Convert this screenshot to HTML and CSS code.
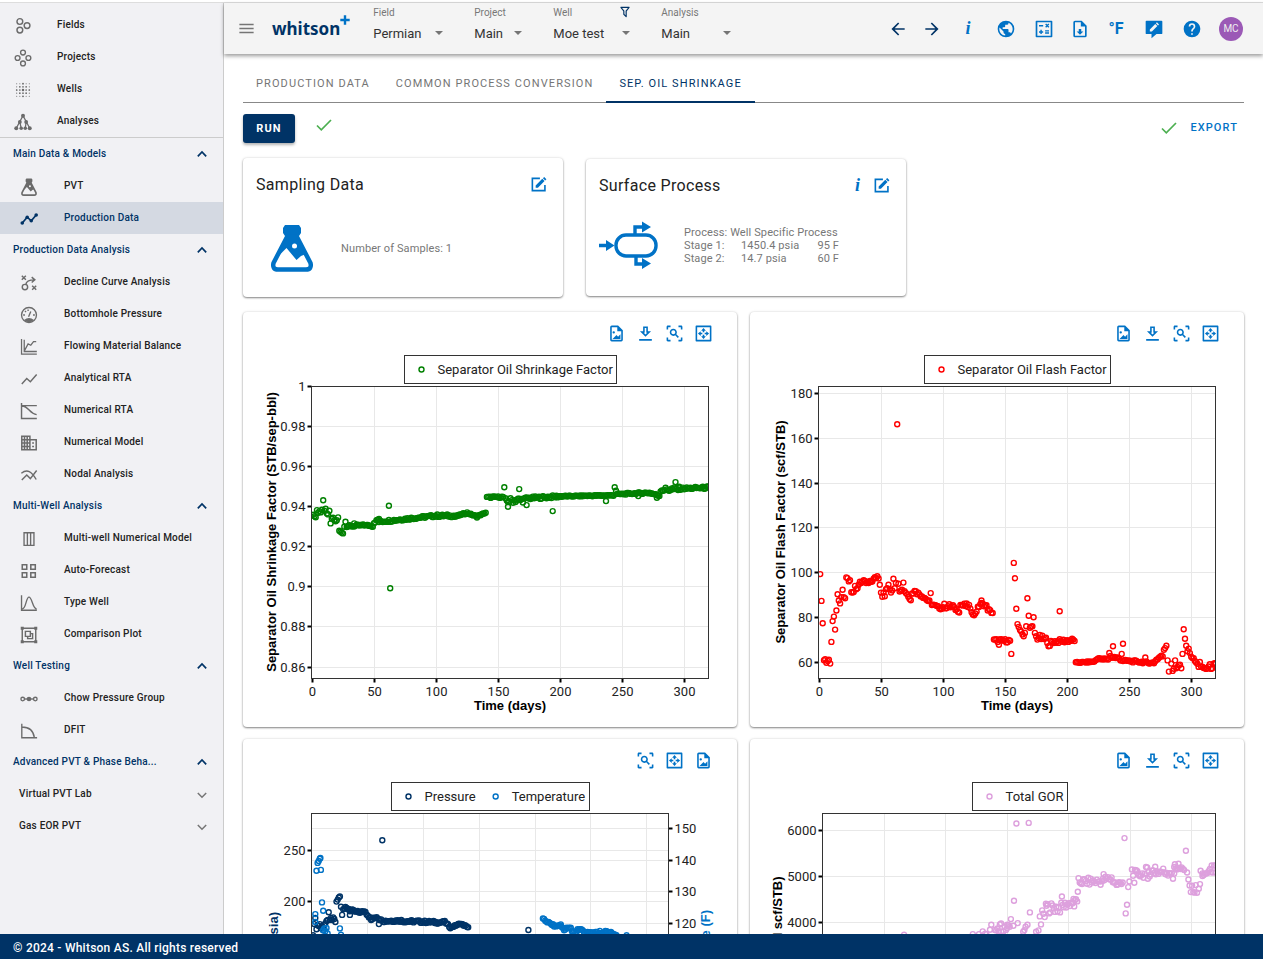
FILE: index.html
```html
<!DOCTYPE html>
<html lang="en">
  <head>
    <meta charset="UTF-8" />
    <meta name="viewport" content="width=device-width, initial-scale=1.0" />
    <title>whitson+ | Separator Oil Shrinkage</title>
    <link rel="stylesheet" href="styles.css">
  </head>
  <body>
    <!-- icon sprite -->
    <svg class="sprite" aria-hidden="true">
      <symbol id="i-fields" viewBox="0 0 20 20">
        <g fill="none" stroke="currentColor" stroke-width="1.6"><circle cx="6.5" cy="5" r="3.2"/><circle cx="6.5" cy="14.5" r="3.2"/><circle cx="14.5" cy="9.5" r="3.2"/></g>
      </symbol>
      <symbol id="i-projects" viewBox="0 0 20 20">
        <g fill="none" stroke="currentColor" stroke-width="1.5"><circle cx="10" cy="4" r="2.7"/><circle cx="4" cy="10" r="2.7"/><circle cx="16" cy="10" r="2.7"/><circle cx="10" cy="16" r="2.7"/></g>
      </symbol>
      <symbol id="i-wells" viewBox="0 0 20 20">
        <g stroke="currentColor" fill="none" stroke-linecap="round">
          <path stroke-width="1.2" stroke-dasharray="0 3.5" d="M3 3h14.5M3 17h14.5M3 3v14.5M17 3v14.5"/>
          <path stroke-width="1.9" stroke-dasharray="0 3.5" d="M6.5 6.5h8M6.5 13.5h8M6.5 6.5v8M13.5 6.5v8M10 3v14.5M3 10h14.5"/>
          <path stroke-width="2.8" d="M10 10v.01"/>
        </g>
      </symbol>
      <symbol id="i-analyses" viewBox="0 0 20 20">
        <g fill="currentColor"><circle cx="10" cy="3" r="2.2"/><circle cx="6.5" cy="10" r="2.1"/><circle cx="13.5" cy="10" r="2.1"/><circle cx="2.5" cy="17" r="2.2"/><circle cx="8" cy="17" r="2"/><circle cx="12.5" cy="17" r="2"/><circle cx="17.5" cy="17" r="2.2"/></g>
        <path fill="none" stroke="currentColor" stroke-width="1.4" d="M2.5 17L10 3l7.5 14M6.5 10L8 17M13.5 10l-1 7"/>
      </symbol>
      <symbol id="i-flask" viewBox="0 0 44 48">
        <path fill="currentColor" d="M15 1h14l2 3v5l-2 3v2h-14v-2l-2-3v-5z"/>
        <path fill="none" stroke="currentColor" stroke-width="4.5" stroke-linejoin="round" d="M17 13L3.5 39Q2 45.5 8 45.5h28Q42 45.5 40.5 39L27 13z"/>
        <path fill="currentColor" d="M17 13h10l9 17-5 2-4.5 4-10-12-8 8z"/>
        <circle cx="24.5" cy="22" r="2.5" fill="#fff"/>
      </symbol>
      <symbol id="i-trend" viewBox="0 0 20 20">
        <g fill="currentColor"><circle cx="2.5" cy="14.5" r="2"/><circle cx="8" cy="8" r="2"/><circle cx="12.5" cy="12" r="2"/><circle cx="18" cy="5.5" r="2"/></g>
        <path fill="none" stroke="currentColor" stroke-width="1.9" d="M2.5 14.5L8 8l4.5 4L18 5.5"/>
      </symbol>
      <symbol id="i-decline" viewBox="0 0 20 20">
        <g fill="none" stroke="currentColor" stroke-width="1.6"><path d="M2 2l4.5 4.5M6.5 2L2 6.5M13.5 13l4.5 4.5M18 13l-4.5 4.5"/><circle cx="5.5" cy="14.5" r="3"/><path d="M6.5 11.5Q7 6.5 16 6.5M13 3.5l3.5 3-3.5 3"/></g>
      </symbol>
      <symbol id="i-gauge" viewBox="0 0 20 20">
        <circle cx="10" cy="10" r="8.3" fill="none" stroke="currentColor" stroke-width="1.5"/>
        <path fill="currentColor" d="M4.5 15.5Q10 11 15.5 15.5Q10 20.5 4.5 15.5z"/>
        <path fill="none" stroke="currentColor" stroke-width="1.5" d="M9.5 12l2.5-6M3.5 10h2M14.5 10h2M5.5 5.5l1.2 1.2M9 4v1.5"/>
      </symbol>
      <symbol id="i-balance" viewBox="0 0 20 20">
        <path fill="none" stroke="currentColor" stroke-width="1.4" d="M1.7 1v17h17M4.7 2v13h14M5 14L9 6.5l3 1.5 3-4 3 0"/>
      </symbol>
      <symbol id="i-line" viewBox="0 0 20 20">
        <path fill="none" stroke="currentColor" stroke-width="1.6" d="M2 15.5l5.5-6 4 3.5 7-8"/>
      </symbol>
      <symbol id="i-numrta" viewBox="0 0 20 20">
        <path fill="none" stroke="currentColor" stroke-width="1.6" d="M1.7 1v17.3h17M1.7 4h17M2 4.5c8 0 8 8.5 16.5 9.5"/>
      </symbol>
      <symbol id="i-grid" viewBox="0 0 20 20">
        <path fill="none" stroke="currentColor" stroke-width="1.7" d="M2 2.5h9v15h-9zM2 6.3h9M2 10h9M2 13.8h9M5 2.5v15M8 2.5v15M11 6.3h7v11.2h-7M13.5 10h2M13.5 13.8h2"/>
      </symbol>
      <symbol id="i-nodal" viewBox="0 0 20 20">
        <path fill="none" stroke="currentColor" stroke-width="1.6" d="M1.5 8C8 3 13 6 18 15M2 15.5l5.5-5.5 4 4 7-9"/>
      </symbol>
      <symbol id="i-columns" viewBox="0 0 20 20">
        <path fill="none" stroke="currentColor" stroke-width="1.5" d="M4.5 3h11v14h-11zM8.2 3v14M11.8 3v14"/>
      </symbol>
      <symbol id="i-squares" viewBox="0 0 20 20">
        <path fill="none" stroke="currentColor" stroke-width="1.7" d="M2.5 3h5v5h-5zM12 3h5v5h-5zM2.5 12h5v5h-5zM12 12h5v5h-5z"/>
      </symbol>
      <symbol id="i-bell" viewBox="0 0 20 20">
        <path fill="none" stroke="currentColor" stroke-width="1.5" d="M1.7 1.5v16.5h17M2.5 16.5C7 16.5 6.5 3.5 10 3.5s4 13 8.5 13"/>
      </symbol>
      <symbol id="i-compare" viewBox="0 0 20 20">
        <path fill="none" stroke="currentColor" stroke-width="1.6" d="M2.5 2.5h15v15h-15zM6 6h5.5v5.5h-5.5zM8.5 11.5v2.5h5.5v-5.5h-2.5"/>
        <path fill="currentColor" d="M.8 .8h3.4v3.4h-3.4zM15.8 .8h3.4v3.4h-3.4zM.8 15.8h3.4v3.4h-3.4zM15.8 15.8h3.4v3.4h-3.4z"/>
      </symbol>
      <symbol id="i-chow" viewBox="0 0 20 20">
        <g fill="none" stroke="currentColor" stroke-width="1.5"><circle cx="3" cy="10" r="2"/><circle cx="17" cy="10" r="2"/><path d="M5 10h10"/></g>
        <circle cx="10" cy="10" r="2.6" fill="currentColor"/>
      </symbol>
      <symbol id="i-dfit" viewBox="0 0 20 20">
        <path fill="none" stroke="currentColor" stroke-width="1.5" d="M2 2v15.5h17M2 5.5c8 0 13 4 14 12"/>
      </symbol>
      <symbol id="i-up" viewBox="0 0 10 10"><path fill="none" stroke="currentColor" stroke-width="1.7" d="M.8 7.3L5 3l4.2 4.3"/></symbol>
      <symbol id="i-down" viewBox="0 0 10 10"><path fill="none" stroke="currentColor" stroke-width="1.5" d="M.8 3L5 7.3 9.2 3"/></symbol>
      <symbol id="i-menu" viewBox="0 0 24 24"><path fill="currentColor" d="M3,6H21V8H3V6M3,11H21V13H3V11M3,16H21V18H3V16Z"/></symbol>
      <symbol id="i-plus" viewBox="0 0 10 10"><path fill="none" stroke="currentColor" stroke-width="2.4" d="M5 .3v9.4M.3 5h9.4"/></symbol>
      <symbol id="i-filter" viewBox="0 0 24 24"><path fill="currentColor" d="M15,19.88C15.04,20.18 14.94,20.5 14.71,20.71C14.32,21.1 13.69,21.1 13.3,20.71L9.29,16.7C9.06,16.47 8.96,16.16 9,15.87V10.75L4.21,4.62C3.87,4.19 3.95,3.56 4.38,3.22C4.57,3.08 4.78,3 5,3H19C19.22,3 19.43,3.08 19.62,3.22C20.05,3.56 20.13,4.19 19.79,4.62L15,10.75V19.88M7.04,5L11,10.06V15.58L13,17.58V10.05L16.96,5H7.04Z"/></symbol>
      <symbol id="i-left" viewBox="0 0 24 24"><path fill="currentColor" d="M20,11V13H8L13.5,18.5L12.08,19.92L4.16,12L12.08,4.08L13.5,5.5L8,11H20Z"/></symbol>
      <symbol id="i-right" viewBox="0 0 24 24"><path fill="currentColor" d="M4,11V13H16L10.5,18.5L11.92,19.92L19.84,12L11.92,4.08L10.5,5.5L16,11H4Z"/></symbol>
      <symbol id="i-earth" viewBox="0 0 24 24"><path fill="currentColor" d="M17.9,17.39C17.64,16.59 16.89,16 16,16H15V13A1,1 0 0,0 14,12H8V10H10A1,1 0 0,0 11,9V7H13A2,2 0 0,0 15,5V4.59C17.93,5.77 20,8.64 20,12C20,14.08 19.2,15.97 17.9,17.39M11,19.93C7.05,19.44 4,16.08 4,12C4,11.38 4.08,10.78 4.21,10.21L9,15V16A2,2 0 0,0 11,18M12,2A10,10 0 0,0 2,12A10,10 0 0,0 12,22A10,10 0 0,0 22,12A10,10 0 0,0 12,2Z"/></symbol>
      <symbol id="i-calc" viewBox="0 0 24 24"><path fill="none" stroke="currentColor" stroke-width="2" stroke-linejoin="round" d="M3 3h18v18h-18z"/><path fill="none" stroke="currentColor" stroke-width="1.7" d="M6 8h5M6 15.5h5M8.5 13v5M13.3 14.2h4.7M13.3 16.8h4.7M14 6l3.8 3.8M17.8 6L14 9.8"/></symbol>
      <symbol id="i-filedown" viewBox="0 0 24 24"><path fill="currentColor" d="M14,2L20,8V20A2,2 0 0,1 18,22H6A2,2 0 0,1 4,20V4A2,2 0 0,1 6,2H14M18,20V9H13V4H6V20H18M12,19L8,15H10.5V12H13.5V15H16L12,19Z"/></symbol>
      <symbol id="i-feedback" viewBox="0 0 24 24"><path fill="currentColor" d="M3 2h18a1 1 0 0 1 1 1v14a1 1 0 0 1-1 1h-6l-6 5v-5H3a1 1 0 0 1-1-1V3a1 1 0 0 1 1-1z"/><path fill="#f4f4f4" d="M7 15v-2.5l6.5-6.5 2.5 2.5L9.5 15zM14.3 5.2l1.2-1.2 2.5 2.5-1.2 1.2z"/></symbol>
      <symbol id="i-help" viewBox="0 0 24 24"><path fill="currentColor" d="M15.07,11.25L14.17,12.17C13.45,12.89 13,13.5 13,15H11V14.5C11,13.39 11.45,12.39 12.17,11.67L13.41,10.41C13.78,10.05 14,9.55 14,9C14,7.89 13.1,7 12,7A2,2 0 0,0 10,9H8A4,4 0 0,1 12,5A4,4 0 0,1 16,9C16,9.88 15.64,10.67 15.07,11.25M13,19H11V17H13M12,2A10,10 0 0,0 2,12A10,10 0 0,0 12,22A10,10 0 0,0 22,12C22,6.47 17.5,2 12,2Z"/></symbol>
      <symbol id="i-check" viewBox="0 0 16 16"><path fill="none" stroke="currentColor" stroke-width="1.7" d="M1 8.5l4.3 4.3L15 3"/></symbol>
      <symbol id="i-edit" viewBox="0 0 18 18"><path fill="none" stroke="currentColor" stroke-width="1.7" d="M10.5 2.5h-8v13h13.3v-6"/><path fill="currentColor" d="M6 12.5v-2.5l7-7 2.4 2.4-7 7.1zM13.7 2.3l1.3-1.3 2.4 2.4-1.3 1.3z"/></symbol>
      <symbol id="i-separator" viewBox="0 0 60 48">
        <g fill="none" stroke="currentColor"><rect x="17" y="14" width="40" height="21" rx="10" stroke-width="3.4"/><path stroke-width="3.4" d="M0 24.5h9M36 13V6h7M37 36v7h7"/></g>
        <path fill="currentColor" d="M7 19l8.5 5.5L7 30zM43 .5l9 5.5-9 5.5zM43 37l9 5.5-9 5.5z"/>
      </symbol>
      <symbol id="i-image" viewBox="0 0 24 24"><path fill="currentColor" d="M14,2L20,8V20A2,2 0 0,1 18,22H6A2,2 0 0,1 4,20V4A2,2 0 0,1 6,2H14M18,20V9H13V4H6V20H18M17,13V19H7L12,14L14,16M10,10.5A1.5,1.5 0 0,1 8.5,12A1.5,1.5 0 0,1 7,10.5A1.5,1.5 0 0,1 8.5,9A1.5,1.5 0 0,1 10,10.5Z"/></symbol>
      <symbol id="i-download" viewBox="0 0 24 24"><path fill="currentColor" d="M13,5V11H14.17L12,13.17L9.83,11H11V5H13M15,3H9V9H5L12,16L19,9H15V3M20,19H4V21H20V19Z"/></symbol>
      <symbol id="i-scan" viewBox="0 0 24 24"><path fill="currentColor" d="M17 22V20H20V17H22V20.5C22 20.89 21.84 21.24 21.54 21.54C21.24 21.84 20.89 22 20.5 22H17M7 22H3.5C3.11 22 2.76 21.84 2.46 21.54C2.16 21.24 2 20.89 2 20.5V17H4V20H7V22M17 2H20.5C20.89 2 21.24 2.16 21.54 2.46C21.84 2.76 22 3.11 22 3.5V7H20V4H17V2M7 2V4H4V7H2V3.5C2 3.11 2.16 2.76 2.46 2.46C2.76 2.16 3.11 2 3.5 2H7M10.5 6C13 6 15 8 15 10.5C15 11.38 14.75 12.2 14.31 12.9L17.57 16.16L16.16 17.57L12.9 14.31C12.2 14.75 11.38 15 10.5 15C8 15 6 13 6 10.5C6 8 8 6 10.5 6M10.5 8C9.12 8 8 9.12 8 10.5C8 11.88 9.12 13 10.5 13C11.88 13 13 11.88 13 10.5C13 9.12 11.88 8 10.5 8Z"/></symbol>
      <symbol id="i-expand" viewBox="0 0 24 24"><path fill="none" stroke="currentColor" stroke-width="2" stroke-linejoin="round" d="M3 3h18v18h-18z"/><path fill="currentColor" d="M12 5l3 3.5h-2v2h-2v-2h-2zM12 19l3-3.5h-2v-2h-2v2h-2zM5 12l3.5-3v2h2v2h-2v2zM19 12l-3.5-3v2h-2v2h2v2z"/></symbol>
    </svg>

    <div class="app">
      <div class="workspace">
        <nav class="sidebar">
          <ul class="nav-list nav-top">
            <li><a href="#"><svg class="icon"><use href="#i-fields"/></svg>Fields</a></li>
            <li><a href="#"><svg class="icon"><use href="#i-projects"/></svg>Projects</a></li>
            <li><a href="#"><svg class="icon"><use href="#i-wells"/></svg>Wells</a></li>
            <li><a href="#"><svg class="icon"><use href="#i-analyses"/></svg>Analyses</a></li>
          </ul>

          <button class="nav-header">Main Data &amp; Models<svg><use href="#i-up"/></svg></button>
          <ul class="nav-list">
            <li><a href="#"><svg class="icon"><use href="#i-flask"/></svg>PVT</a></li>
            <li><a href="#" class="active"><svg class="icon"><use href="#i-trend"/></svg>Production Data</a></li>
          </ul>

          <button class="nav-header">Production Data Analysis<svg><use href="#i-up"/></svg></button>
          <ul class="nav-list">
            <li><a href="#"><svg class="icon"><use href="#i-decline"/></svg>Decline Curve Analysis</a></li>
            <li><a href="#"><svg class="icon"><use href="#i-gauge"/></svg>Bottomhole Pressure</a></li>
            <li><a href="#"><svg class="icon"><use href="#i-balance"/></svg>Flowing Material Balance</a></li>
            <li><a href="#"><svg class="icon"><use href="#i-line"/></svg>Analytical RTA</a></li>
            <li><a href="#"><svg class="icon"><use href="#i-numrta"/></svg>Numerical RTA</a></li>
            <li><a href="#"><svg class="icon"><use href="#i-grid"/></svg>Numerical Model</a></li>
            <li><a href="#"><svg class="icon"><use href="#i-nodal"/></svg>Nodal Analysis</a></li>
          </ul>

          <button class="nav-header">Multi-Well Analysis<svg><use href="#i-up"/></svg></button>
          <ul class="nav-list">
            <li><a href="#"><svg class="icon"><use href="#i-columns"/></svg>Multi-well Numerical Model</a></li>
            <li><a href="#"><svg class="icon"><use href="#i-squares"/></svg>Auto-Forecast</a></li>
            <li><a href="#"><svg class="icon"><use href="#i-bell"/></svg>Type Well</a></li>
            <li><a href="#"><svg class="icon"><use href="#i-compare"/></svg>Comparison Plot</a></li>
          </ul>

          <button class="nav-header">Well Testing<svg><use href="#i-up"/></svg></button>
          <ul class="nav-list">
            <li><a href="#"><svg class="icon"><use href="#i-chow"/></svg>Chow Pressure Group</a></li>
            <li><a href="#"><svg class="icon"><use href="#i-dfit"/></svg>DFIT</a></li>
          </ul>

          <button class="nav-header">Advanced PVT &amp; Phase Beha...<svg><use href="#i-up"/></svg></button>
          <button class="nav-header nav-sub">Virtual PVT Lab<svg><use href="#i-down"/></svg></button>
          <button class="nav-header nav-sub">Gas EOR PVT<svg><use href="#i-down"/></svg></button>
        </nav>

        <div class="page">
          <header class="topbar">
            <button class="menu-btn" aria-label="Menu"><svg><use href="#i-menu"/></svg></button>
            <a href="#" class="logo">whitson<svg><use href="#i-plus"/></svg></a>

            <div class="pickers">
              <div class="picker">
                <label for="field">Field</label>
                <div class="select-wrap"><select id="field"><option>Permian</option></select></div>
              </div>
              <div class="picker picker-sm">
                <label for="project">Project</label>
                <div class="select-wrap"><select id="project"><option>Main</option></select></div>
              </div>
              <div class="picker picker-lg">
                <div class="picker-head">
                  <label for="well">Well</label>
                  <button aria-label="Filter wells"><svg><use href="#i-filter"/></svg></button>
                </div>
                <div class="select-wrap"><select id="well"><option>Moe test</option></select></div>
              </div>
              <div class="picker">
                <label for="analysis">Analysis</label>
                <div class="select-wrap"><select id="analysis"><option>Main</option></select></div>
              </div>
            </div>

            <div class="actions">
              <button class="narrow dark" aria-label="Back"><svg><use href="#i-left"/></svg></button>
              <button class="narrow dark" aria-label="Forward"><svg><use href="#i-right"/></svg></button>
              <button class="info">i</button>
              <button aria-label="Map"><svg><use href="#i-earth"/></svg></button>
              <button aria-label="Calculator"><svg><use href="#i-calc"/></svg></button>
              <button class="narrow" aria-label="Download report"><svg><use href="#i-filedown"/></svg></button>
              <button class="units">°F</button>
              <button aria-label="Feedback"><svg><use href="#i-feedback"/></svg></button>
              <button aria-label="Help"><svg><use href="#i-help"/></svg></button>
              <button class="avatar">MC</button>
            </div>
          </header>

          <main class="content">
            <nav class="tabs">
              <a href="#">PRODUCTION DATA</a>
              <a href="#">COMMON PROCESS CONVERSION</a>
              <a href="#" class="active">SEP. OIL SHRINKAGE</a>
            </nav>

            <div class="run-row">
              <button class="run-btn">RUN</button>
              <svg class="check"><use href="#i-check"/></svg>
              <div class="export">
                <svg class="check"><use href="#i-check"/></svg>
                <button>EXPORT</button>
              </div>
            </div>

            <div class="info-cards">
              <section class="card info-card">
                <div class="card-head">
                  <h2>Sampling Data</h2>
                  <button aria-label="Edit sampling data"><svg><use href="#i-edit"/></svg></button>
                </div>
                <div class="card-body sampling">
                  <svg class="flask"><use href="#i-flask"/></svg>
                  <p>Number of Samples: 1</p>
                </div>
              </section>
              <section class="card info-card">
                <div class="card-head">
                  <h2>Surface Process</h2>
                  <button class="info">i</button>
                  <button aria-label="Edit surface process"><svg><use href="#i-edit"/></svg></button>
                </div>
                <div class="card-body surface">
                  <svg class="separator"><use href="#i-separator"/></svg>
                  <table>
                    <tr><td colspan="3">Process: Well Specific Process</td></tr>
                    <tr><td class="stage">Stage 1:</td><td>1450.4 psia</td><td class="temp">95 F</td></tr>
                    <tr><td class="stage">Stage 2:</td><td>14.7 psia</td><td class="temp">60 F</td></tr>
                  </table>
                </div>
              </section>
            </div>

            <div class="charts">
              <section class="card chart-card">
                <div class="chart-tools">
                  <button aria-label="Save image"><svg><use href="#i-image"/></svg></button>
                  <button aria-label="Download"><svg><use href="#i-download"/></svg></button>
                  <button aria-label="Zoom"><svg><use href="#i-scan"/></svg></button>
                  <button aria-label="Fit"><svg><use href="#i-expand"/></svg></button>
                </div>
                <svg class="chart" id="shrinkage" viewBox="0 0 494 377"></svg>
              </section>
              <section class="card chart-card">
                <div class="chart-tools">
                  <button aria-label="Save image"><svg><use href="#i-image"/></svg></button>
                  <button aria-label="Download"><svg><use href="#i-download"/></svg></button>
                  <button aria-label="Zoom"><svg><use href="#i-scan"/></svg></button>
                  <button aria-label="Fit"><svg><use href="#i-expand"/></svg></button>
                </div>
                <svg class="chart" id="flash" viewBox="0 0 494 377"></svg>
              </section>
              <section class="card chart-card">
                <div class="chart-tools">
                  <button aria-label="Zoom"><svg><use href="#i-scan"/></svg></button>
                  <button aria-label="Fit"><svg><use href="#i-expand"/></svg></button>
                  <button aria-label="Save image"><svg><use href="#i-image"/></svg></button>
                </div>
                <svg class="chart" id="conditions" viewBox="0 0 494 377"></svg>
              </section>
              <section class="card chart-card">
                <div class="chart-tools">
                  <button aria-label="Save image"><svg><use href="#i-image"/></svg></button>
                  <button aria-label="Download"><svg><use href="#i-download"/></svg></button>
                  <button aria-label="Zoom"><svg><use href="#i-scan"/></svg></button>
                  <button aria-label="Fit"><svg><use href="#i-expand"/></svg></button>
                </div>
                <svg class="chart" id="gor" viewBox="0 0 494 377"></svg>
              </section>
            </div>
          </main>
        </div>
      </div>

      <footer class="footer">© 2024 - Whitson AS. All rights reserved</footer>
    </div>

    <script src="charts.js"></script>
  </body>
</html>
```

FILE: styles.css
```css
* {
  box-sizing: border-box;
}

body {
  margin: 0;
  font-family: Roboto, "Liberation Sans", sans-serif;
  color: #222;
  background-color: #fff;
}

button {
  padding: 0;
  border: none;
  background: none;
  font-family: inherit;
  color: inherit;
  cursor: pointer;
}

a {
  color: inherit;
  text-decoration: none;
}

ul {
  list-style: none;
  margin: 0;
  padding: 0;
}

.sprite {
  display: none;
}

.app {
  display: flex;
  flex-direction: column;
  height: 100vh;
  padding-top: 2px;
}

.workspace {
  display: flex;
  flex: 1;
  min-height: 0;
  border-top: 1px solid #ddd;
}

/* sidebar */
.sidebar {
  width: 224px;
  flex-shrink: 0;
  padding-top: 5px;
  background-color: #f1f1f4;
  border-right: 1px solid #ccc;
  overflow: hidden;
  font-size: 10px;
  font-weight: 500;
}

.nav-list a {
  display: flex;
  align-items: center;
  gap: 26px;
  height: 32px;
  padding: 0 0 2px 20px;
  letter-spacing: 0.02em;
}

.nav-list .icon {
  width: 18px;
  height: 18px;
  margin-top: 3px;
  color: #6b6b6b;
}

.nav-top {
  padding-bottom: 1px;
  border-bottom: 1px solid #ccc;
}

.nav-list.nav-top a {
  gap: 25px;
  padding: 0 0 0 14px;
}

.nav-list a.active {
  background-color: #d4d9e2;
  color: #003366;
}

.nav-list a.active .icon {
  color: #003366;
}

.nav-header {
  display: flex;
  align-items: center;
  justify-content: space-between;
  width: 100%;
  height: 32px;
  padding: 0 16px 2px 13px;
  font-size: 10px;
  font-weight: 500;
  letter-spacing: 0.02em;
  color: #003366;
}

.nav-header svg {
  width: 10px;
  height: 10px;
  margin-top: 2px;
}

.nav-sub {
  padding-left: 19px;
  color: #222;
}

.nav-sub svg {
  margin-top: 4px;
  color: #757575;
}

/* top bar */
.page {
  display: flex;
  flex-direction: column;
  flex: 1;
  min-width: 0;
}

.topbar {
  display: flex;
  align-items: center;
  height: 51px;
  flex-shrink: 0;
  padding: 0 20px 0 13px;
  background-color: #f4f4f4;
  box-shadow: 0 2px 4px rgba(0, 0, 0, 0.4);
  z-index: 1;
}

.menu-btn svg {
  display: block;
  width: 19px;
  height: 19px;
  color: #757575;
}

.logo {
  display: flex;
  margin-left: 16px;
  font-family: "Noto Sans", sans-serif;
  font-size: 17px;
  font-weight: 700;
  line-height: 24px;
  color: #003366;
}

.logo svg {
  width: 10px;
  height: 10px;
  margin-top: -2px;
  color: #0072c6;
}

.pickers {
  display: flex;
  gap: 28px;
  margin-left: 23px;
}

.picker {
  width: 73px;
}

.picker-sm {
  width: 51px;
}

.picker-lg {
  width: 80px;
}

.picker-head {
  display: flex;
  justify-content: space-between;
}

.picker-head button {
  height: 16px;
  padding-right: 1px;
}

.picker-head svg {
  width: 14px;
  height: 14px;
  color: #003366;
}

.picker label {
  display: block;
  font-size: 10px;
  line-height: 16px;
  color: #777;
}

.select-wrap {
  display: grid;
  align-items: center;
  margin-bottom: 7px;
}

.select-wrap select,
.select-wrap::after {
  grid-area: 1 / 1;
}

.select-wrap::after {
  content: "";
  justify-self: end;
  margin-right: 3px;
  border: 4px solid transparent;
  border-top-color: #757575;
  border-bottom: none;
  pointer-events: none;
}

.select-wrap select {
  appearance: none;
  width: 100%;
  height: 24px;
  padding: 0;
  border: none;
  background: none;
  font-family: inherit;
  font-size: 13px;
  color: #333;
}

.actions {
  display: flex;
  align-items: center;
  margin-left: auto;
  color: #0072c6;
}

.actions button {
  display: flex;
  align-items: center;
  justify-content: center;
  width: 38px;
  height: 30px;
}

.actions .narrow {
  width: 34px;
}

.actions .dark {
  color: #003366;
}

.actions svg {
  width: 20px;
  height: 20px;
}

.info {
  font-family: "Liberation Serif", serif;
  font-size: 18px;
  font-weight: 700;
  font-style: italic;
}

.actions .units {
  font-size: 16px;
  font-weight: 700;
}

.actions .avatar {
  width: 24px;
  height: 24px;
  margin-left: 8px;
  border-radius: 50%;
  background-color: #9b59b6;
  color: #eee;
  font-size: 10px;
}

/* content */
.content {
  flex: 1;
  min-height: 0;
  padding: 10px 19px 0;
  overflow-y: auto;
  scrollbar-width: none;
}

.tabs {
  display: flex;
  border-bottom: 1px solid #888;
}

.tabs a {
  height: 39px;
  padding: 0 13px;
  margin-bottom: -1px;
  border-bottom: 2px solid transparent;
  font-size: 11px;
  line-height: 39px;
  letter-spacing: 0.1em;
  color: #757575;
}

.tabs a.active {
  border-color: #003366;
  color: #003366;
}

.run-row {
  display: flex;
  align-items: flex-start;
  margin-top: 11px;
}

.run-btn {
  width: 52px;
  height: 29px;
  border-radius: 3px;
  background-color: #003366;
  box-shadow: 0 2px 3px rgba(0, 0, 0, 0.3);
  color: #fff;
  font-size: 11px;
  font-weight: 700;
  letter-spacing: 0.1em;
}

.check {
  width: 16px;
  height: 16px;
  color: #4caf50;
}

.run-btn + .check {
  margin: 3px 0 0 21px;
}

.export {
  display: flex;
  align-items: center;
  gap: 13px;
  height: 27px;
  margin-left: auto;
  padding-right: 6px;
}

.export button {
  font-size: 11px;
  font-weight: 500;
  letter-spacing: 0.1em;
  color: #0072c6;
}

.card {
  border-radius: 4px;
  background-color: #fff;
  box-shadow: 0 1px 2px rgba(0, 0, 0, 0.45), 0 0 3px rgba(0, 0, 0, 0.12);
}

.info-cards {
  display: flex;
  align-items: center;
  gap: 23px;
  margin-top: 15px;
}

.info-card {
  width: 320px;
  padding: 14px 16px 24px 13px;
}

.card-head {
  display: flex;
  align-items: center;
  gap: 13px;
  height: 24px;
  color: #0072c6;
}

.card-head h2 {
  flex: 1;
  margin: 0;
  font-size: 16px;
  font-weight: 400;
  letter-spacing: 0.02em;
  color: #222;
}

.card-head svg {
  display: block;
  width: 17px;
  height: 17px;
}

.card-body {
  display: flex;
  align-items: center;
  font-size: 11px;
  letter-spacing: 0.01em;
  white-space: nowrap;
  color: #777;
}

.sampling {
  gap: 27px;
  padding: 28px 0 1px 14px;
}

.surface {
  gap: 25px;
  padding: 24px 0 3px;
}

.card-body svg {
  color: #0072c6;
}

.flask {
  width: 44px;
  height: 48px;
}

.separator {
  width: 60px;
  height: 48px;
}

.card-body table {
  border-collapse: collapse;
  width: 155px;
  line-height: 13px;
}

.card-body td {
  padding: 0;
}

.card-body .stage {
  width: 57px;
}

.card-body .temp {
  text-align: right;
}

/* charts */
.charts {
  display: grid;
  grid-template-columns: 1fr 1fr;
  gap: 12px 13px;
  margin-top: 15px;
  padding-bottom: 20px;
}

.chart-tools {
  display: flex;
  justify-content: flex-end;
  height: 38px;
  padding: 4px 19px 0 0;
}

.chart-tools button {
  display: flex;
  align-items: center;
  justify-content: center;
  width: 29px;
  color: #0072c6;
}

.chart-tools svg {
  width: 19px;
  height: 19px;
}

.chart {
  display: block;
  width: 100%;
}

.chart text {
  font-size: 13px;
  fill: #222;
}

.chart .axis-title {
  font-family: "Liberation Sans", Arial, sans-serif;
  font-weight: 700;
  fill: #000;
  text-anchor: middle;
}

.chart .grid {
  stroke: #e8e8e8;
}

.chart .tick {
  stroke: #000;
  stroke-width: 2;
}

.chart .frame {
  fill: none;
  stroke: #333;
}

.chart .point {
  fill: none;
  stroke-width: 1.4;
}

.footer {
  height: 25px;
  flex-shrink: 0;
  padding-left: 13px;
  background-color: #003366;
  color: #fff;
  font-size: 12px;
  font-weight: 500;
  line-height: 29px;
  letter-spacing: 0.02em;
  z-index: 1;
}
```

FILE: charts.js
```js
const SVG_NS = "http://www.w3.org/2000/svg";
const TOP = 36.5;
const BOTTOM = 328.5;

function add(parent, name, attrs, text) {
  const node = document.createElementNS(SVG_NS, name);
  for (const key in attrs) node.setAttribute(key, attrs[key]);
  if (text !== undefined) node.textContent = text;
  parent.appendChild(node);
  return node;
}

// repeatable scatter between -1 and 1
function wobble(n) {
  const s = Math.sin(n * 12.9898) * 43758.5453;
  return (s - Math.floor(s)) * 2 - 1;
}

// runs: [day from, value from, day to, value to, spread], one reading per day
function expand(series) {
  const points = series.points.slice();
  series.runs.forEach(([d0, v0, d1, v1, spread]) => {
    for (let d = d0; d <= d1; d++) {
      const t = d1 === d0 ? 0 : (d - d0) / (d1 - d0);
      points.push([d, v0 + (v1 - v0) * t + wobble(d) * spread]);
    }
  });
  return points;
}

function drawChart(id, chart) {
  const svg = document.getElementById(id);
  const { left, right } = chart;
  const xPos = (d) => left + (d / 320) * (right - left);
  // each axis is given by one tick value, its position and the pixels per unit
  const yPos = (axis, v) => axis.y + (axis.value - v) * axis.scale;

  const clip = add(svg, "clipPath", { id: id + "-clip" });
  add(clip, "rect", { x: left, y: TOP, width: right - left, height: BOTTOM - TOP });

  for (let d = 0; d <= 300; d += 50) {
    const x = Math.round(xPos(d)) + 0.5;
    if (d > 0) add(svg, "line", { class: "grid", x1: x, x2: x, y1: TOP, y2: BOTTOM });
    add(svg, "line", { class: "tick", x1: x, x2: x, y1: BOTTOM, y2: BOTTOM + 4 });
    add(svg, "text", { x: x, y: 346, "text-anchor": "middle" }, d);
  }

  chart.axes.forEach((axis) => {
    const onRight = axis.side === "right";
    axis.ticks.forEach((v) => {
      const y = Math.round(yPos(axis, v) - 0.5) + 0.5;
      const x = onRight ? right : left;
      add(svg, "line", { class: "grid", x1: left, x2: right, y1: y, y2: y });
      add(svg, "line", { class: "tick", x1: x, x2: onRight ? x + 4 : x - 4, y1: y, y2: y });
      add(svg, "text", {
        x: onRight ? x + 6 : x - 6,
        y: y + 4,
        "text-anchor": onRight ? "start" : "end",
      }, v);
    });
    const title = add(svg, "text", {
      class: "axis-title",
      transform: `translate(${axis.titleX} 182) rotate(-90)`,
    }, axis.title);
    if (axis.color) title.style.fill = axis.color;
  });

  const plot = add(svg, "g", { "clip-path": `url(#${id}-clip)` });
  chart.series.forEach((series) => {
    const axis = chart.axes[series.axis || 0];
    expand(series).forEach(([d, v]) => {
      add(plot, "circle", {
        class: "point",
        cx: (xPos(d) + 0.5).toFixed(1),
        cy: yPos(axis, v).toFixed(1),
        r: 2.5,
        stroke: series.color,
      });
    });
  });

  add(svg, "rect", { class: "frame", x: left, y: TOP, width: right - left, height: BOTTOM - TOP });
  add(svg, "text", { class: "axis-title", x: (left + right) / 2, y: 360 }, "Time (days)");
  drawLegend(svg, chart.series, (left + right) / 2);
}

function drawLegend(svg, seriesList, center) {
  const group = add(svg, "g", {});
  let x = 17;
  seriesList.forEach((series) => {
    add(group, "circle", { class: "point", cx: x, cy: 19, r: 2.5, stroke: series.color });
    const label = add(group, "text", { x: x + 16, y: 23 }, series.name);
    x += 16 + label.getComputedTextLength() + 20;
  });
  const width = Math.round(x - 16);
  add(group, "rect", { class: "frame", x: 0, y: 5, width: width, height: 28 });
  group.setAttribute("transform", `translate(${Math.round(center - width / 2) + 0.5} .5)`);
}

drawChart("shrinkage", {
  left: 68.5,
  right: 465.5,
  axes: [{
    title: "Separator Oil Shrinkage Factor (STB/sep-bbl)",
    titleX: 33, value: 1, y: 36.5, scale: 2004,
    ticks: ["1", "0.98", "0.96", "0.94", "0.92", "0.9", "0.88", "0.86"],
  }],
  series: [{
    name: "Separator Oil Shrinkage Factor",
    color: "#008000",
    points: [
      [1, 0.936], [2, 0.9353], [3, 0.9348], [4, 0.9383], [5, 0.937], [6, 0.9378], [7, 0.9372],
      [8, 0.9385], [9, 0.9432], [10, 0.938], [11, 0.939], [12, 0.9367], [13, 0.9362], [14, 0.938],
      [15, 0.9317], [16, 0.934], [17, 0.9345], [18, 0.9333], [19, 0.9328], [20, 0.9333], [21, 0.9347],
      [22, 0.928], [23, 0.9275], [24, 0.927], [25, 0.9267], [26, 0.93], [27, 0.9325], [34, 0.9317],
      [62, 0.9405], [63, 0.8993], [155, 0.9497], [158, 0.94], [167, 0.9488], [173, 0.9408],
      [194, 0.9378], [237, 0.9428], [244, 0.9497], [245, 0.948], [263, 0.9453], [278, 0.9445],
      [293, 0.9523],
    ],
    runs: [
      [28, 0.9302, 42, 0.9308, 0.0005], [42, 0.931, 49, 0.9303, 0.0004], [50, 0.932, 54, 0.934, 0.0004],
      [54, 0.9325, 100, 0.9355, 0.0006], [100, 0.9355, 115, 0.9355, 0.0007],
      [115, 0.935, 124, 0.9368, 0.0004], [125, 0.937, 133, 0.935, 0.0004], [134, 0.9355, 140, 0.937, 0.0003],
      [141, 0.9447, 154, 0.9449, 0.0004], [156, 0.943, 172, 0.9435, 0.0014],
      [173, 0.9442, 200, 0.9452, 0.0007], [200, 0.9452, 243, 0.9457, 0.0003],
      [246, 0.9462, 272, 0.947, 0.0004], [273, 0.9468, 280, 0.9455, 0.0004],
      [281, 0.9485, 296, 0.9488, 0.0012], [296, 0.949, 320, 0.9496, 0.0006],
    ],
  }],
});

drawChart("flash", {
  left: 68.5,
  right: 465.5,
  axes: [{
    title: "Separator Oil Flash Factor (scf/STB)",
    titleX: 35, value: 180, y: 43.5, scale: 2.2375,
    ticks: [180, 160, 140, 120, 100, 80, 60],
  }],
  series: [{
    name: "Separator Oil Flash Factor",
    color: "#ff0000",
    points: [
      [1, 99.3], [2, 87.3], [3, 77.3], [4, 60.8], [5, 61.2], [6, 59.7], [7, 60.5], [8, 61], [9, 59.3],
      [10, 69], [11, 78.3], [12, 80.3], [13, 74.5], [14, 83], [15, 90.3], [16, 87.5], [17, 86.2],
      [18, 89], [19, 92.3], [20, 89], [21, 88.5], [22, 97.8], [23, 97.5], [24, 96], [25, 96.5],
      [26, 91.2], [27, 91], [28, 91.3], [29, 94], [30, 92.5], [31, 93], [32, 94.5],
      [48, 97.3], [49, 94.5], [50, 91], [51, 89.2], [52, 91], [53, 89.4], [54, 92.5], [55, 93],
      [56, 94.5], [57, 92.5], [58, 91], [59, 92], [60, 97.2], [61, 93], [62, 95.3], [63, 166.3],
      [64, 95], [65, 91.5], [66, 92], [67, 92.3], [68, 95.5], [90, 90.8], [145, 67.7], [155, 63.6],
      [157, 104.3], [158, 97.4], [159, 83.8], [166, 73], [167, 76], [168, 88.5], [169, 80.7],
      [170, 75.3], [171, 75.8], [172, 76], [173, 80], [174, 73], [175, 71.5], [176, 70], [185, 67],
      [186, 67.2], [194, 82.7], [234, 64], [237, 67], [244, 63.6], [245, 68.2], [263, 62],
      [277, 62.5], [278, 65.5], [279, 66.2], [280, 67.3], [281, 60.7], [282, 55.7], [284, 59.3],
      [285, 56], [286, 57], [287, 60.7], [292, 57.2], [293, 63.6], [294, 74.6], [295, 70.4],
      [296, 67.3], [297, 64.8], [298, 66], [306, 57.8], [307, 60],
    ],
    runs: [
      [33, 96, 41, 95, 0.9], [41, 95.5, 47, 98.3, 0.8], [69, 91.8, 74, 88, 0.6],
      [75, 90.5, 78, 92, 0.6], [79, 91, 84, 89.3, 0.8], [85, 88.8, 89, 86.8, 0.8],
      [91, 85.8, 99, 83.8, 0.5], [100, 85, 108, 84.8, 1.2], [109, 84, 113, 82.8, 0.7],
      [114, 85.5, 121, 85, 1], [122, 83.5, 125, 80.7, 0.4], [126, 82, 131, 87, 0.8],
      [131, 86, 135, 85, 0.6], [136, 83.5, 140, 82, 0.7], [141, 69.6, 154, 69.5, 0.8],
      [160, 76.7, 165, 71.5, 0.3], [177, 71, 184, 69.8, 1.3], [187, 69, 206, 69.8, 0.9],
      [207, 59.7, 221, 60.1, 0.3], [222, 60.3, 226, 62, 0.3], [227, 61.2, 233, 61.2, 0.5],
      [235, 62.5, 243, 61.3, 0.8], [245, 60.6, 262, 59.9, 0.5], [263, 59.8, 270, 59.5, 0.4],
      [271, 60.5, 276, 62.8, 0.4], [288, 57.5, 291, 58.8, 0.5], [299, 63.5, 305, 59, 0.6],
      [308, 57.7, 312, 57, 0.4], [313, 57.5, 320, 58.6, 1.3],
    ],
  }],
});

drawChart("conditions", {
  left: 68.5,
  right: 425.5,
  axes: [
    {
      title: "Pressure (psia)", color: "#003366",
      titleX: 35, value: 250, y: 73.5, scale: 1.022, ticks: [250, 200, 150, 100, 50],
    },
    {
      title: "Temperature (F)", color: "#0072c6", side: "right",
      titleX: 467, value: 150, y: 51.5, scale: 3.16,
      ticks: [150, 140, 130, 120, 110, 100, 90, 80, 70],
    },
  ],
  series: [
    {
      name: "Pressure",
      color: "#003366",
      points: [
        [1, 167], [2, 178], [3, 184], [4, 173], [5, 177], [6, 176], [7, 178], [8, 174], [9, 176],
        [10, 172], [11, 177], [12, 179], [13, 181], [14, 182], [15, 189.5], [16, 182], [17, 184],
        [18, 182], [19, 184.5], [20, 183], [21, 180], [22, 200], [23, 202], [24, 204], [25, 205],
        [26, 195], [27, 187], [34, 187], [53, 182], [60, 178], [63, 260], [64, 180], [194, 172.2],
      ],
      runs: [
        [28, 193.5, 33, 193, 1.5], [34, 191.5, 41, 189.5, 1.5], [42, 189.5, 48, 190.5, 1],
        [49, 188, 52, 184, 1], [54, 183, 58, 185, 1], [59, 184, 62, 182, 1],
        [65, 181, 80, 181.5, 1.2], [81, 181, 117, 179.5, 1.3], [118, 181, 124, 175, 1],
        [125, 175, 133, 178.5, 0.8], [134, 178, 140, 175, 0.8],
      ],
    },
    {
      name: "Temperature",
      color: "#0072c6",
      axis: 1,
      points: [
        [3, 122.9], [3, 120.4], [4, 136.6], [5, 139.1], [6, 139.7], [7, 140.4], [7.5, 140.7],
        [8, 136.9], [9, 126.6], [10, 124], [10, 117.8], [11, 118.4], [12, 117.5], [13, 118.5],
        [14, 116.8], [25, 118.4], [26, 116.4], [258, 117.6], [282, 116.2],
      ],
      runs: [
        [207, 121.3, 217, 119.2, 0.3], [218, 119, 223, 119.5, 0.3], [223, 119, 227, 118, 0.5],
        [228, 118.5, 232, 118.5, 0.2], [233, 117.5, 237, 117.2, 0.3], [238, 118, 243, 118, 0.4],
        [244, 117, 262, 117, 0.3], [263, 117.4, 268, 117.2, 0.2], [269, 116.8, 273, 116.3, 0.2],
      ],
    },
  ],
});

drawChart("gor", {
  left: 72.5,
  right: 465.5,
  axes: [{
    title: "Total GOR (actual scf/STB)",
    titleX: 32, value: 6000, y: 53.5, scale: 0.0458,
    ticks: [6000, 5000, 4000, 3000, 2000, 1000],
  }],
  series: [{
    name: "Total GOR",
    color: "#dda0dd",
    points: [
      [66, 3724], [122, 3738], [127, 3738], [130, 3796], [132, 3750], [133, 3738], [136, 3833],
      [137, 3942], [140, 3830], [141, 3818], [142, 3860], [143, 3796], [144, 3950], [145, 3970],
      [145, 3796], [147, 3796], [148, 3900], [149, 3830], [150, 3942], [150, 3870], [151, 3930],
      [152, 3900], [153, 4065], [155, 3920], [155.5, 4465], [157.5, 6153], [158.5, 3978],
      [163, 3789], [164, 3825], [165, 3900], [166.5, 3942], [167.5, 6167], [168.5, 4211],
      [173.5, 3789], [175.5, 3818], [176.5, 4124], [177.5, 3949], [178.5, 4255],
      [179.5, 4182], [180.5, 4109], [181.5, 4400], [194.5, 4560], [204.5, 4342],
      [206, 4500], [207, 4451], [207.5, 4662], [228.5, 5047], [245.5, 5833], [246.5, 4189],
      [247.5, 4378], [248.5, 4764], [249.5, 4887], [251.5, 5149], [252.5, 5010],
      [253.5, 4858], [264.5, 4945], [270.5, 5207], [285, 4945], [286, 5060], [286.5, 5265],
      [289.5, 5273], [295.5, 5556], [296.5, 5084], [297.5, 4931], [298.5, 4800],
      [299.5, 4655], [300.5, 4793], [301.5, 4650], [302.5, 4647], [303.5, 4807],
      [304.5, 4640], [306, 4727], [307, 4829], [307.5, 5120], [309, 5004], [316.5, 5236],
      [317.5, 5084], [318.5, 5236], [319.5, 5084], [319.5, 5236],
    ],
    runs: [
      [182, 4310, 194, 4310, 120], [195, 4350, 205, 4450, 90], [208, 4880, 228, 4890, 85],
      [229, 4930, 235, 4960, 80], [236, 4900, 240, 4800, 60], [241, 4850, 244, 4880, 50],
      [254, 5060, 262, 5040, 80], [263, 5100, 284, 5100, 110], [286, 5200, 294, 5130, 60],
      [309, 5020, 316, 5130, 50],
    ],
  }],
});
```
